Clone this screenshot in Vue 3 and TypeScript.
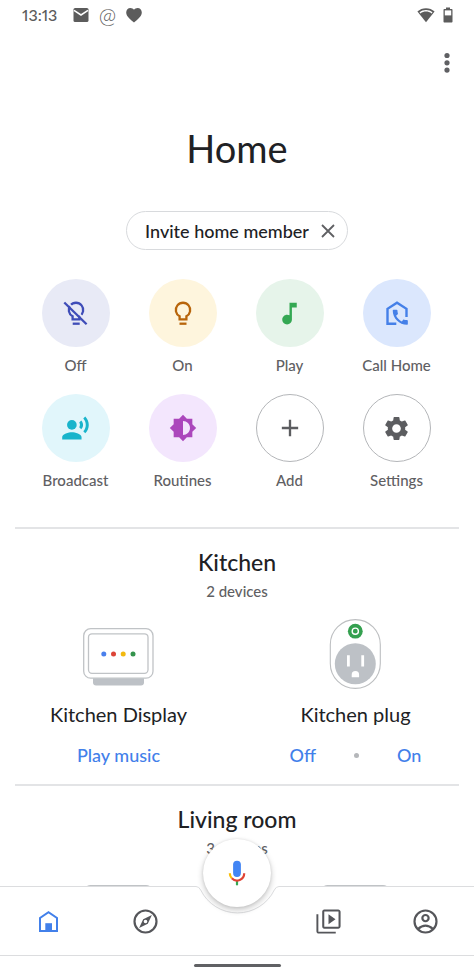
<script setup lang="ts">
interface Action {
  id: string
  label: string
  tone: string
}

interface Device {
  id: string
  name: string
  art: 'display' | 'plug'
  actions: string[]
}

interface Room {
  name: string
  count: string
  devices: Device[]
}

const actions: Action[] = [
  { id: 'off', label: 'Off', tone: 'indigo' },
  { id: 'on', label: 'On', tone: 'amber' },
  { id: 'play', label: 'Play', tone: 'green' },
  { id: 'call', label: 'Call Home', tone: 'blue' },
  { id: 'broadcast', label: 'Broadcast', tone: 'cyan' },
  { id: 'routines', label: 'Routines', tone: 'purple' },
  { id: 'add', label: 'Add', tone: 'plain' },
  { id: 'settings', label: 'Settings', tone: 'plain' },
]

const rooms: Room[] = [
  {
    name: 'Kitchen',
    count: '2 devices',
    devices: [
      { id: 'k1', name: 'Kitchen Display', art: 'display', actions: ['Play music'] },
      { id: 'k2', name: 'Kitchen plug', art: 'plug', actions: ['Off', 'On'] },
    ],
  },
  {
    name: 'Living room',
    count: '3 devices',
    devices: [
      { id: 'l1', name: '', art: 'display', actions: [] },
      { id: 'l2', name: '', art: 'display', actions: [] },
    ],
  },
]
</script>

<template>
  <div class="app">
    <header class="status">
      <span class="time">13:13</span>
      <svg class="s-icon" viewBox="0 0 16 16">
        <rect x="0.5" y="1" width="15" height="14" rx="1.6" fill="#5c5c5c" />
        <path d="M1 3.4l7 4.6 7-4.6" fill="none" stroke="#fff" stroke-width="1.5" />
      </svg>
      <span class="at">@</span>
      <svg class="s-icon" viewBox="0 0 16 16">
        <path d="M8 15.4C5 12.800 .2 9.600 .2 5.400 .2 2.800 2 .9 4.400 .9 5.900 .9 7.200 1.600 8 2.800 8.800 1.600 10.100 .9 11.600 .9 14 .9 15.800 2.800 15.800 5.400 15.800 9.600 11 12.800 8 15.400z" fill="#5c5c5c" />
      </svg>
      <span class="spacer"></span>
      <svg class="wifi" viewBox="0 0 18 16">
        <path d="M9 15.300L.4 4.500C5 0 13 0 17.600 4.500z" fill="#5c5c5c" />
        <path d="M2.500 5.400C6 2.300 12 2.300 15.500 5.400L14.700 6.400C11 3.900 7 3.900 3.300 6.400z" fill="#fff" />
      </svg>
      <svg class="battery" viewBox="0 0 10 16">
        <path d="M3 .5h4v1.600h1.500c.6 0 1 .4 1 1V14.500c0 .6-.4 1-1 1h-7c-.6 0-1-.4-1-1V3.100c0-.6.4-1 1-1H3z" fill="#5c5c5c" />
        <rect x="1.800" y="3.400" width="6.400" height="5" fill="#fff" />
      </svg>
    </header>

    <main class="content">
      <div class="topbar">
        <button class="more" aria-label="More options">
          <svg viewBox="0 0 32 32" fill="#5f6063">
            <circle cx="16" cy="8.500" r="2.600" />
            <circle cx="16" cy="15.800" r="2.600" />
            <circle cx="16" cy="23.100" r="2.600" />
          </svg>
        </button>
      </div>

      <h1>Home</h1>

      <div class="chip">
        <button class="chip-text">Invite home member</button>
        <button class="chip-close" aria-label="Dismiss">
          <svg viewBox="0 0 14 14" fill="none" stroke="#5f6063" stroke-width="1.800">
            <path d="M1 1l12 12M13 1L1 13" />
          </svg>
        </button>
      </div>

      <div class="actions">
        <button v-for="a in actions" :key="a.id" class="action">
          <span class="disc" :class="a.tone">
            <svg v-if="a.id === 'off'" class="i32" viewBox="0 0 32 32" fill="none" stroke="currentColor" stroke-width="2.300">
              <path d="M12.600 19.300A7.200 7.200 0 1 1 19.400 19.300V22.300H12.600z" />
              <path d="M6 4.100L28 25.500" stroke="#e8eaf6" stroke-width="1.900" />
              <path d="M12.700 26.700h7" />
              <path d="M4.300 5.500L26.600 27.200" />
            </svg>
            <svg v-else-if="a.id === 'on'" class="i32" viewBox="0 0 32 32" fill="none" stroke="currentColor" stroke-width="2.300">
              <path d="M12.600 19.300A7.200 7.200 0 1 1 19.400 19.300V22.300H12.600z" />
              <path d="M12.500 26.700h7" />
            </svg>
            <svg v-else-if="a.id === 'play'" class="i29" viewBox="0 0 24 24" fill="currentColor">
              <path d="M12 3v10.550c-.59-.34-1.270-.55-2-.55-2.210 0-4 1.790-4 4s1.790 4 4 4 4-1.790 4-4V7h4V3h-6z" />
            </svg>
            <svg v-else-if="a.id === 'call'" class="i32" viewBox="0 0 32 32">
              <path d="M15.300 26.800H6.500V11.800L16 5.700L25.500 11.800V20" fill="none" stroke="currentColor" stroke-width="2.400" />
              <path transform="translate(9.200 10.200) scale(.84)" fill="currentColor" d="M20.010 15.380c-1.230 0-2.420-.2-3.530-.56-.35-.12-.74-.03-1.010.24l-1.570 1.970c-2.830-1.350-5.480-3.900-6.890-6.830l1.950-1.660c.27-.28.35-.67.24-1.020-.37-1.110-.56-2.300-.56-3.530 0-.54-.45-.99-.99-.99H4.190C3.650 3 3 3.240 3 3.990 3 13.280 10.730 21 20.010 21c.71 0 .99-.63.99-1.180v-3.450c0-.54-.45-.99-.99-.99z" />
            </svg>
            <svg v-else-if="a.id === 'broadcast'" class="i29" viewBox="0 0 24 24" fill="currentColor">
              <circle cx="9" cy="9" r="4" />
              <path d="M9 15c-2.670 0-8 1.340-8 4v2h16v-2c0-2.660-5.330-4-8-4zM16.760 5.360l-1.680 1.690c.84 1.180.84 2.710 0 3.890l1.680 1.690c2.020-2.020 2.020-5.070 0-7.270zM20.070 2l-1.630 1.630c2.770 3.020 2.770 7.560 0 10.740L20.070 16c3.900-3.890 3.910-9.950 0-14z" />
            </svg>
            <svg v-else-if="a.id === 'routines'" class="i28" viewBox="0 0 24 24" fill="currentColor">
              <path d="M20 15.310L23.310 12 20 8.690V4h-4.690L12 .69 8.690 4H4v4.690L.69 12 4 15.310V20h4.690L12 23.310 15.310 20H20v-4.690zM12 18V6c3.310 0 6 2.690 6 6s-2.690 6-6 6z" />
            </svg>
            <svg v-else-if="a.id === 'add'" class="i28" viewBox="0 0 24 24" fill="currentColor">
              <path d="M19 13h-6v6h-2v-6H5v-2h6V5h2v6h6v2z" />
            </svg>
            <svg v-else class="i29" viewBox="0 0 24 24" fill="currentColor">
              <path d="M19.140 12.940c.04-.3.06-.61.06-.94 0-.32-.02-.64-.07-.94l2.030-1.580c.18-.14.23-.41.12-.61l-1.920-3.320c-.12-.22-.37-.29-.59-.22l-2.390.96c-.5-.38-1.030-.7-1.620-.94l-.36-2.540c-.04-.24-.24-.41-.48-.41h-3.840c-.24 0-.43.17-.47.41l-.36 2.540c-.59.24-1.130.57-1.620.94l-2.390-.96c-.22-.08-.47 0-.59.22L2.740 8.870c-.12.21-.08.47.12.61l2.030 1.580c-.05.3-.09.63-.09.94s.02.64.07.94l-2.030 1.580c-.18.14-.23.41-.12.61l1.920 3.320c.12.22.37.29.59.22l2.390-.96c.5.38 1.030.7 1.620.94l.36 2.540c.05.24.24.41.48.41h3.840c.24 0 .44-.17.47-.41l.36-2.540c.59-.24 1.130-.56 1.620-.94l2.390.96c.22.08.47 0 .59-.22l1.920-3.320c.12-.22.07-.47-.12-.61l-2.010-1.580zM12 15.600c-1.980 0-3.600-1.620-3.600-3.600s1.620-3.600 3.600-3.600 3.600 1.620 3.600 3.600-1.620 3.600-3.600 3.600z" />
            </svg>
          </span>
          <span class="action-label">{{ a.label }}</span>
        </button>
      </div>

      <section v-for="room in rooms" :key="room.name" class="room">
        <h2>{{ room.name }}</h2>
        <p class="count">{{ room.count }}</p>
        <div class="devices">
          <article v-for="d in room.devices" :key="d.id" class="device">
            <svg v-if="d.art === 'display'" class="art" viewBox="1 0 71 70">
              <path d="M11 59h51v4.500c0 1.700-1.200 3-3 3H14c-1.800 0-3-1.300-3-3z" fill="#bdc1c6" />
              <rect x="1.700" y="9.700" width="69.300" height="49.500" rx="7" fill="#fff" stroke="#c0c3c6" stroke-width="1.300" />
              <rect x="6.500" y="14.800" width="59.500" height="39.500" rx="3.500" fill="#fff" stroke="#c0c3c6" stroke-width="1.300" />
              <circle cx="21.800" cy="35" r="2.500" fill="#4a80ec" />
              <circle cx="31.500" cy="35" r="2.500" fill="#dc4437" />
              <circle cx="41.200" cy="35" r="2.500" fill="#f2b90f" />
              <circle cx="51" cy="35" r="2.500" fill="#34934d" />
            </svg>
            <svg v-else class="art" viewBox="1 0 71 70">
              <rect x="11.300" y=".6" width="50" height="68.800" rx="25" fill="#fff" stroke="#bdbfc1" stroke-width="1.100" />
              <circle cx="36.300" cy="12.200" r="7.400" fill="#34a04f" />
              <circle cx="36.300" cy="12.200" r="3.100" fill="none" stroke="#fff" stroke-width="1.400" />
              <circle cx="36.300" cy="44.800" r="20.500" fill="#bdc1c6" />
              <path d="M28 36.300h2.800v11.200H28zM42.300 36.300h2.800v11.200h-2.800zM32.700 58.300v-2.500a3.700 3.700 0 0 1 7.400 0v2.500z" fill="#fff" />
            </svg>
            <h3 v-if="d.name">{{ d.name }}</h3>
            <div v-if="d.actions.length" class="device-actions">
              <template v-for="(label, i) in d.actions" :key="label">
                <span v-if="i > 0" class="dot"></span>
                <button>{{ label }}</button>
              </template>
            </div>
          </article>
        </div>
      </section>
    </main>

    <nav class="nav">
      <a class="tab active" href="#home" aria-label="Home">
        <svg class="i29" viewBox="0 0 29 29">
          <path d="M6 24.100V11L14.500 5.200L23 11V24.100z" fill="none" stroke="currentColor" stroke-width="2" />
          <path d="M11.300 16.200h6.700v8h-6.700z" fill="currentColor" />
        </svg>
      </a>
      <a class="tab" href="#explore" aria-label="Explore">
        <svg class="i29" viewBox="0 0 24 24">
          <circle cx="12" cy="12" r="9.100" fill="none" stroke="currentColor" stroke-width="1.800" />
          <path fill="currentColor" fill-rule="evenodd" d="M6.700 17.300l7.200-3.400L17.300 6.700 10.100 10.100zM12 10.500a1.500 1.500 0 1 1 0 3 1.500 1.500 0 0 1 0-3z" />
        </svg>
      </a>
      <div class="dock">
        <svg class="notch" viewBox="0 0 87 30">
          <path d="M0 .5H2Q5 .5 6.700 4A41 41 0 0 0 80.300 4Q82 .5 85 .5H87" fill="none" stroke="#dcdddf" />
        </svg>
        <button class="mic" aria-label="Assistant">
          <svg class="i32" viewBox="0 0 32 32" fill="none" stroke-width="2.200">
            <rect x="12.100" y="3.700" width="7.800" height="16.200" rx="3.900" fill="#4285f4" />
            <path d="M16 23.500v4.800" stroke="#34a853" />
            <path d="M8.800 16.300A7.200 7.200 0 0 0 10.800 21.300" stroke="#fbbc04" />
            <path d="M10.800 21.300A7.200 7.200 0 0 0 23.200 16.300" stroke="#e04335" />
          </svg>
        </button>
      </div>
      <a class="tab" href="#feed" aria-label="Feed">
        <svg class="i29" viewBox="0 0 24 24" fill="currentColor">
          <path d="M3.600 6H2v14c0 1.100.9 2 2 2h14v-1.600H3.600V6zM20 2H8.500C7.400 2 6.800 2.900 6.800 4v12c0 1.100.6 2 1.700 2H20c1.100 0 2-.9 2-2V4c0-1.100-.9-2-2-2zm.3 14.300H8.500V3.700h11.800zM12 5.900v8.300l5.800-4.150z" />
        </svg>
      </a>
      <a class="tab" href="#account" aria-label="Account">
        <svg class="i29" viewBox="0 0 24 24" fill="none" stroke="currentColor" stroke-width="1.800">
          <circle cx="12" cy="12" r="9.100" />
          <circle cx="12" cy="9.200" r="2.600" />
          <path d="M5.700 18.300Q12 12.600 18.300 18.300" />
        </svg>
      </a>
    </nav>
    <div class="gesture"><span></span></div>
  </div>
</template>

<style>
body {
  margin: 0;
  background: #fff;
}
</style>

<style scoped>
.app {
  height: 100vh;
  display: flex;
  flex-direction: column;
  overflow: hidden;
  background: #fff;
  color: #202124;
  font-family: Lato, "Open Sans", sans-serif;
}

button {
  border: 0;
  padding: 0;
  margin: 0;
  background: none;
  color: inherit;
  font: inherit;
  cursor: pointer;
}

svg {
  display: block;
  flex: none;
}

.status {
  flex: none;
  height: 30px;
  display: flex;
  align-items: center;
  padding: 0 21px 0 22px;
  color: #5c5c5c;
}

.time {
  min-width: 51px;
  font-size: 16px;
  line-height: 20px;
  font-weight: 500;
  font-variant-numeric: proportional-nums;
}

.at {
  width: 19px;
  margin: 0 9px;
  font-size: 21px;
  line-height: 20px;
  font-weight: 300;
  text-align: center;
}

.s-icon {
  width: 16px;
  height: 16px;
}

.spacer {
  flex: 1;
}

.wifi {
  width: 18px;
  height: 16px;
  margin-right: 8px;
}

.battery {
  width: 10px;
  height: 16px;
}

.content {
  flex: 1;
  min-height: 0;
  overflow: hidden;
}

.topbar {
  height: 66px;
  display: flex;
  align-items: center;
  justify-content: flex-end;
  padding-right: 11px;
}

.more,
.more svg {
  width: 32px;
  height: 32px;
}

h1 {
  margin: 28px 0 0;
  font-size: 38px;
  line-height: 48px;
  font-weight: 400;
  text-align: center;
}

.chip {
  width: fit-content;
  height: 39px;
  box-sizing: border-box;
  margin: 39px auto 29px;
  padding: 0 12px 0 18px;
  display: flex;
  align-items: center;
  gap: 12px;
  border: 1px solid #d8dadd;
  border-radius: 20px;
}

.chip-text {
  font-size: 18px;
  line-height: 24px;
  font-weight: 500;
}

.chip-close svg {
  width: 14px;
  height: 14px;
}

.actions {
  display: grid;
  grid-template-columns: repeat(4, 1fr);
  row-gap: 19px;
  padding: 0 24px 0 22px;
  margin-bottom: 37px;
}

.action {
  display: flex;
  flex-direction: column;
  align-items: center;
  gap: 8px;
}

.disc {
  width: 68px;
  height: 68px;
  box-sizing: border-box;
  border-radius: 50%;
  display: flex;
  align-items: center;
  justify-content: center;
}

.action-label,
.count {
  font-size: 15px;
  line-height: 20px;
  font-weight: 500;
  color: #5f6063;
}

.indigo { background: #e8eaf6; color: #3f4db8; }
.amber { background: #fef5dd; color: #b8650b; }
.green { background: #e6f4ea; color: #34a853; }
.blue { background: #dbe7fd; color: #4580e8; }
.cyan { background: #e1f6fb; color: #19b4cb; }
.purple { background: #f3e6fd; color: #ab47bc; }
.plain { border: 1px solid #b4b6b9; color: #5c5d60; }

.i28 { width: 28px; height: 28px; }
.i29 { width: 29px; height: 29px; }
.i32 { width: 32px; height: 32px; }

.room {
  margin: 0 15px;
  padding: 18px 0 17px;
  border-top: 2px solid #e3e4e6;
  text-align: center;
}

h2 {
  margin: 0;
  font-size: 23px;
  line-height: 30px;
  font-weight: 500;
}

.count {
  margin: 4px 0 18px;
}

.devices {
  display: grid;
  grid-template-columns: 1fr 1fr;
  margin: 0 -15px;
}

.device {
  display: flex;
  flex-direction: column;
  align-items: center;
}

.art {
  width: 71px;
  height: 70px;
}

h3 {
  margin: 13px 0 17px;
  font-size: 20px;
  line-height: 24px;
  font-weight: 400;
}

.device-actions {
  display: flex;
  align-items: center;
  justify-content: center;
  gap: 38px;
  color: #4280ea;
  font-size: 18px;
  line-height: 24px;
  font-weight: 500;
}

.dot {
  width: 5px;
  height: 5px;
  border-radius: 50%;
  background: #b5b7ba;
}

.nav {
  flex: none;
  position: relative;
  height: 69px;
  display: grid;
  grid-template-columns: 1fr 1fr 87px 1fr 1fr;
  background: #fff;
  border-bottom: 1px solid #dcdddf;
}

.tab {
  display: flex;
  align-items: center;
  justify-content: center;
  border-top: 1px solid #dcdddf;
  color: #55565a;
}

.tab.active {
  color: #4280ea;
}

.dock {
  position: relative;
}

.notch {
  width: 100%;
}

.mic {
  position: absolute;
  top: -47px;
  left: 50%;
  width: 68px;
  height: 68px;
  margin-left: -34px;
  border-radius: 50%;
  background: #fff;
  display: flex;
  align-items: center;
  justify-content: center;
  box-shadow: 0 3px 6px rgba(0, 0, 0, 0.22), 0 0 3px rgba(0, 0, 0, 0.1);
}

.gesture {
  flex: none;
  height: 18px;
  display: flex;
  align-items: center;
  justify-content: center;
}

.gesture span {
  width: 87px;
  height: 3px;
  border-radius: 2px;
  background: #606164;
}
</style>
